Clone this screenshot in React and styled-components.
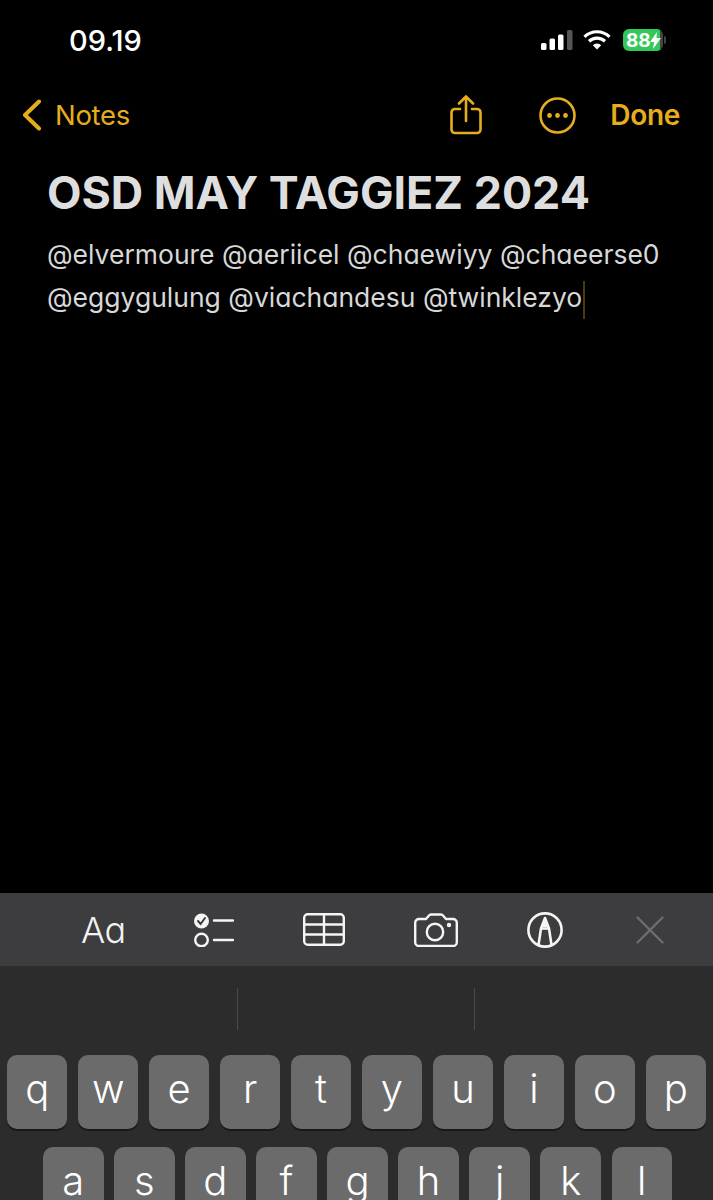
import { createGlobalStyle, styled } from "styled-components"

const Global = createGlobalStyle`
html, body {
  margin: 0;
  padding: 0;
  background: #000;
}
`

const Amber = "#e6ad1c"

const Phone = styled.div`
width: 713px;
height: 1200px;
overflow: hidden;
display: flex;
flex-direction: column;
background: #000;
font-family: Inter, "Liberation Sans", sans-serif;
`

const StatusBar = styled.div`
height: 80px;
flex: none;
display: flex;
align-items: center;
justify-content: space-between;
padding: 0 46px 0 69px;
`
const Time = styled.span`
color: #fff;
font-size: 29px;
font-weight: 500;
letter-spacing: 0;
`
const StatusIcons = styled.div`
display: flex;
align-items: center;
gap: 10px;
`
const Battery = styled.div`
width: 44px;
height: 22px;
flex: none;
margin-left: 2px;
display: flex;
align-items: center;
gap: 1px;
`
const BatteryBody = styled.div`
width: 40px;
height: 22px;
border-radius: 6px;
overflow: hidden;
background: linear-gradient(90deg, #34c759 0 37px, #444 37px);
display: flex;
align-items: center;
padding-left: 3px;
box-sizing: border-box;
color: #fff;
font-size: 19px;
font-weight: 700;
letter-spacing: -0.2px;
`
const BatteryTip = styled.div`
width: 2px;
height: 8px;
border-radius: 0 2px 2px 0;
background: #444;
`

const NavBar = styled.div`
height: 70px;
flex: none;
display: flex;
align-items: center;
padding: 0 33px 0 22px;
color: ${Amber};
`
const BackLabel = styled.span`
font-size: 27.5px;
margin-left: 13px;
flex: 1;
letter-spacing: -0.3px;
`
const NavIcons = styled.div`
display: flex;
align-items: center;
gap: 57px;
margin-right: 34px;
`
const DoneLabel = styled.span`
font-size: 28px;
font-weight: 600;
letter-spacing: -0.3px;
`

const Note = styled.div`
flex: 1;
padding: 15px 40px 0 47px;
`
const Title = styled.h1`
margin: 0;
color: #dedede;
font-size: 44.8px;
line-height: 56px;
font-weight: 700;
white-space: nowrap;
`
const Body = styled.p`
margin: 12px 0 0;
color: #d8d8d8;
font-size: 26.5px;
line-height: 43px;
white-space: nowrap;
font-feature-settings: "cv11";
`
const Caret = styled.span`
display: inline-block;
width: 2px;
height: 38px;
margin-left: 1px;
vertical-align: middle;
background: #4a3c10;
`

const Keyboard = styled.div`
height: 307px;
flex: none;
overflow: hidden;
background: #2c2c2c;
`
const Toolbar = styled.div`
height: 73px;
display: flex;
align-items: center;
gap: 69px;
padding-left: 81px;
background: #3d3d3f;
`
const FormatLabel = styled.span`
width: 44px;
text-align: center;
color: #f2f2f2;
font-size: 36px;
font-weight: 300;
letter-spacing: -0.5px;
font-feature-settings: "cv11";
`
const Suggestions = styled.div`
height: 89px;
display: grid;
grid-template-columns: 238px 237px 1fr;
padding-top: 22px;
box-sizing: border-box;
`
const Suggestion = styled.div`
height: 42px;
border-right: ${(p) => (p.$last ? "none" : "1px solid #4a4a4a")};
`
const KeyRow = styled.div`
display: flex;
gap: 10.5px;
padding: ${(p) => (p.$inset ? "0 41px 0 43px" : "0 7px")};
margin-bottom: 18px;
`
const Key = styled.div`
flex: 1;
height: 74px;
border-radius: 10px;
background: #6b6b6b;
box-shadow: 0 2px 0 #191919;
color: #fff;
font-size: 40px;
font-weight: 300;
line-height: 68px;
text-align: center;
`

const Chevron = () => (
  <svg width="20" height="32" viewBox="0 0 20 32" fill="none" stroke={Amber} strokeWidth="4" strokeLinecap="round" strokeLinejoin="round">
    <path d="M17 2.5 3 16l14 13.5" />
  </svg>
)

const ShareIcon = () => (
  <svg width="32" height="40" viewBox="0 0 32 40" fill="none" stroke={Amber} strokeWidth="2.6" strokeLinecap="round" strokeLinejoin="round">
    <path d="M10 14H5a3.5 3.5 0 0 0-3.5 3.5v17A3.5 3.5 0 0 0 5 38h22a3.5 3.5 0 0 0 3.5-3.5v-17A3.5 3.5 0 0 0 27 14h-5" />
    <path d="M16 26V2M9 8.5 16 1.5l7 7" />
  </svg>
)

const MoreIcon = () => (
  <svg width="37" height="37" viewBox="0 0 37 37">
    <circle cx="18.5" cy="18.5" r="17" fill="none" stroke={Amber} strokeWidth="2.6" />
    <circle cx="10.5" cy="18.5" r="2.4" fill={Amber} />
    <circle cx="18.5" cy="18.5" r="2.4" fill={Amber} />
    <circle cx="26.5" cy="18.5" r="2.4" fill={Amber} />
  </svg>
)

const SignalIcon = () => (
  <svg width="32" height="20" viewBox="0 0 32 20">
    <rect x="0" y="13" width="5.5" height="7" rx="1.5" fill="#fff" />
    <rect x="8.5" y="8.5" width="5.5" height="11.5" rx="1.5" fill="#fff" />
    <rect x="17" y="4.5" width="5.5" height="15.5" rx="1.5" fill="#fff" />
    <rect x="26" y="0" width="5.5" height="20" rx="1.5" fill="#555" />
  </svg>
)

const WifiIcon = () => (
  <svg width="28" height="20" viewBox="0 0 28 20" fill="none" stroke="#fff" strokeWidth="3.2">
    <path d="M1.5 6.8a18 18 0 0 1 25 0" />
    <path d="M6 11.2a11.8 11.8 0 0 1 16 0" />
    <path d="M14 19.6 9.8 15.2a6 6 0 0 1 8.4 0Z" fill="#fff" stroke="none" />
  </svg>
)

const ChecklistIcon = () => (
  <svg width="40" height="34" viewBox="0 0 40 34" fill="none" stroke="#f5f5f5" strokeWidth="2.4" strokeLinecap="round">
    <circle cx="7.5" cy="8" r="7.5" fill="#f5f5f5" stroke="none" />
    <path d="m4 8 2.6 3L11 5" stroke="#3d3d3f" strokeWidth="2" />
    <circle cx="7.5" cy="27" r="6.3" />
    <path d="M20 7.5h19M20 27h19" />
  </svg>
)

const TableIcon = () => (
  <svg width="42" height="33" viewBox="0 0 42 33" fill="none" stroke="#f5f5f5" strokeWidth="2.4">
    <rect x="1.2" y="1.2" width="39.6" height="30.6" rx="3.5" />
    <path d="M1.2 11.5h39.6M1.2 21.5h39.6M21 1.2v30.6" />
  </svg>
)

const CameraIcon = () => (
  <svg width="44" height="34" viewBox="0 0 44 34" fill="none" stroke="#f5f5f5" strokeWidth="2.4" strokeLinejoin="round">
    <path d="M5 6h7l3-3.5a3 3 0 0 1 2-1h10a3 3 0 0 1 2 1L32 6h7a3.8 3.8 0 0 1 3.8 3.8v19.4A3.8 3.8 0 0 1 39 33H5a3.8 3.8 0 0 1-3.8-3.8V9.8A3.8 3.8 0 0 1 5 6Z" />
    <circle cx="21" cy="19" r="8.2" />
    <circle cx="35" cy="12" r="2.2" fill="#f5f5f5" stroke="none" />
  </svg>
)

const MarkupIcon = () => (
  <svg width="36" height="36" viewBox="0 0 36 36" fill="none" stroke="#f5f5f5" strokeWidth="2.6" strokeLinejoin="round">
    <circle cx="18" cy="18" r="16.6" />
    <path d="M11.5 33 14 16.5 18 6l4 10.5L24.5 33" />
    <path d="M14 16.5h8" />
    <path d="M18 6l-3 9h6Z" fill="#f5f5f5" stroke="none" />
  </svg>
)

const CloseIcon = () => (
  <svg width="32" height="28" viewBox="-4 0 32 28" fill="none" stroke="#6d6d6f" strokeWidth="2.4" strokeLinecap="round">
    <path d="m1.5 1.5 25 25M26.5 1.5l-25 25" />
  </svg>
)

const topRow = ["q", "w", "e", "r", "t", "y", "u", "i", "o", "p"]
const middleRow = ["a", "s", "d", "f", "g", "h", "j", "k", "l"]

const App = () => {
  return (
    <Phone>
      <Global />
      <StatusBar>
        <Time>09.19</Time>
        <StatusIcons>
          <SignalIcon />
          <WifiIcon />
          <Battery>
            <BatteryBody>
              88
              <svg width="11" height="17" viewBox="0 0 11 17">
                <path d="M7 0 0 10h4l-1 7 8-11H6.5Z" fill="#fff" />
              </svg>
            </BatteryBody>
            <BatteryTip />
          </Battery>
        </StatusIcons>
      </StatusBar>
      <NavBar>
        <Chevron />
        <BackLabel>Notes</BackLabel>
        <NavIcons>
          <ShareIcon />
          <MoreIcon />
        </NavIcons>
        <DoneLabel>Done</DoneLabel>
      </NavBar>
      <Note>
        <Title>OSD MAY TAGGIEZ 2024</Title>
        <Body>
          @elvermoure @aeriicel @chaewiyy @chaeerse0
          <br />
          @eggygulung @viachandesu @twinklezyo
          <Caret />
        </Body>
      </Note>
      <Keyboard>
        <Toolbar>
          <FormatLabel>Aa</FormatLabel>
          <ChecklistIcon />
          <TableIcon />
          <CameraIcon />
          <MarkupIcon />
          <CloseIcon />
        </Toolbar>
        <Suggestions>
          <Suggestion />
          <Suggestion />
          <Suggestion $last />
        </Suggestions>
        <KeyRow>
          {topRow.map((k) => (
            <Key key={k}>{k}</Key>
          ))}
        </KeyRow>
        <KeyRow $inset>
          {middleRow.map((k) => (
            <Key key={k}>{k}</Key>
          ))}
        </KeyRow>
      </Keyboard>
    </Phone>
  )
}

export default App
